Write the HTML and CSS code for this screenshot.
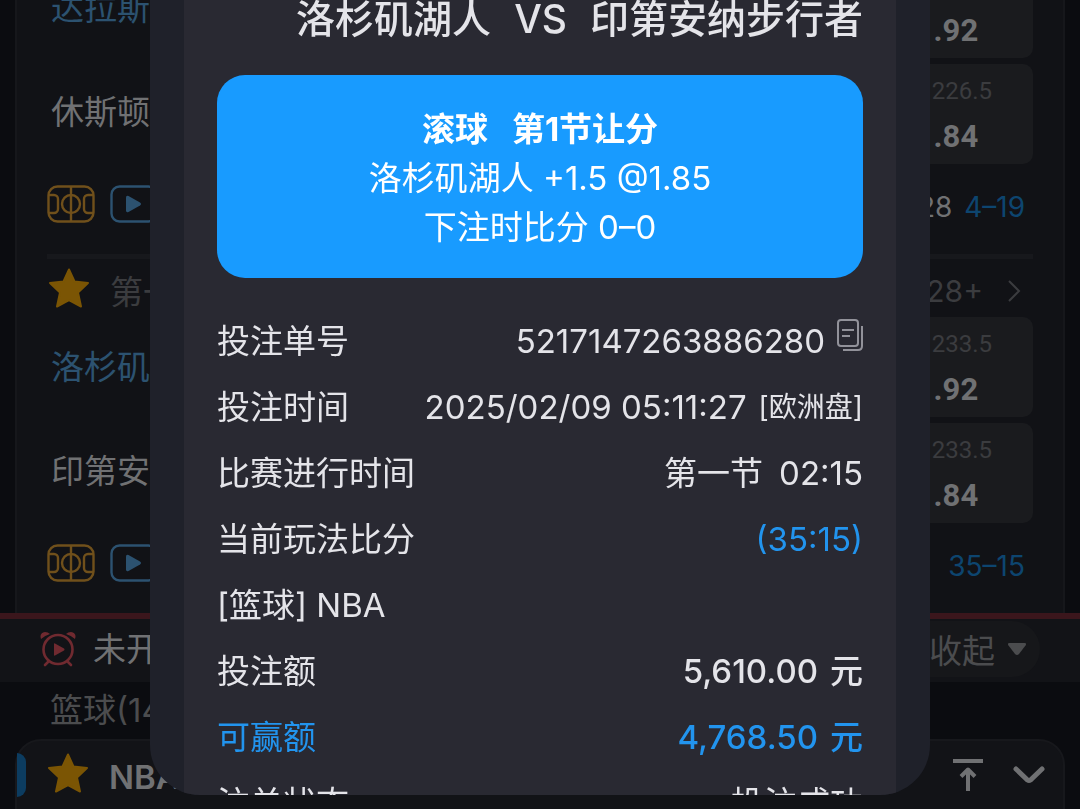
FILE: index.html
```html
<!DOCTYPE html>
<html lang="zh-CN">
<head>
  <meta charset="UTF-8" />
  <meta name="viewport" content="width=device-width, initial-scale=1.0"/>
  <title>注单详情</title>
  <link rel="stylesheet" href="styles.css">
</head>
<body>
  <!-- Shared icons -->
  <svg class="sprite" aria-hidden="true">
    <symbol id="court" viewBox="0 0 48 38">
      <g fill="none" stroke="currentColor" stroke-width="2.4">
        <rect x="1.5" y="1.5" width="45" height="35" rx="9"/>
        <path d="M24 2v34M2 10h5a4 4 0 0 1 4 4v10a4 4 0 0 1-4 4H2M46 10h-5a4 4 0 0 0-4 4v10a4 4 0 0 0 4 4h5"/>
        <circle cx="24" cy="19" r="9"/>
      </g>
    </symbol>
    <symbol id="video" viewBox="0 0 48 38">
      <rect x="1.5" y="1.5" width="45" height="35" rx="8" fill="none" stroke="currentColor" stroke-width="2.4"/>
      <path d="M16 12.500v13q0 2.500 2.500 1.500L30 20.500q2-1.500 0-3L18.500 11q-2.500-1-2.500 1.500z" fill="currentColor"/>
    </symbol>
    <symbol id="star" viewBox="0 0 42 40">
      <path d="M21 1.500L26.500 13.500 40 15 30 24.500 33 38.500 21 32 9 38.500 12 24.500 2 15 15.500 13.500z" fill="currentColor" stroke="currentColor" stroke-width="2" stroke-linejoin="round"/>
    </symbol>
  </svg>

  <main class="page">
    <section class="board">
      <article class="match">
        <div class="line">
          <span class="team serving">达拉斯独行侠</span>
          <button class="odds"><span>大 226.5</span><b>1.92</b></button>
        </div>
        <div class="line">
          <span class="team">休斯顿火箭</span>
          <button class="odds"><span>小 226.5</span><b>1.84</b></button>
        </div>
        <div class="match-foot">
          <svg class="court"><use href="#court"/></svg>
          <svg class="video"><use href="#video"/></svg>
          <p class="score">28–28 <em>4–19</em></p>
        </div>
      </article>

      <article class="match">
        <div class="match-head">
          <svg class="star"><use href="#star"/></svg>
          <span class="period">第一节</span>
          <a class="more" href="#">128+
            <svg viewBox="0 0 14 24"><path d="M2 2l10 10L2 22" fill="none" stroke="currentColor" stroke-width="2"/></svg>
          </a>
        </div>
        <div class="line">
          <span class="team serving">洛杉矶湖人</span>
          <button class="odds"><span>大 233.5</span><b>1.92</b></button>
        </div>
        <div class="line">
          <span class="team">印第安纳步行者</span>
          <button class="odds"><span>小 233.5</span><b>1.84</b></button>
        </div>
        <div class="match-foot">
          <svg class="court"><use href="#court"/></svg>
          <svg class="video"><use href="#video"/></svg>
          <p class="score"><em>35–15</em></p>
        </div>
      </article>
    </section>

    <section class="upcoming">
      <svg class="alarm" viewBox="0 0 36 36">
        <g fill="none" stroke="currentColor" stroke-width="2.6" stroke-linecap="round">
          <circle cx="18" cy="18.500" r="14.500"/>
          <path d="M8 31l-3 3M28 31l3 3"/>
        </g>
        <path d="M1 8q-2-6 4-7 3 0 5 2-5 1.500-9 5zM35 8q2-6-4-7-3 0-5 2 5 1.500 9 5zM14 13v11q0 1 1 .5l9-5q1-1 0-2l-9-5q-1-.5-1 .5z" fill="currentColor"/>
      </svg>
      <h2>未开赛</h2>
      <button class="collapse">收起
        <svg viewBox="0 0 20 14"><path d="M2.500 1h15q2.500 0 1 2.500L12 12q-2 2-4 0L1.500 3.500Q0 1 2.500 1z" fill="currentColor"/></svg>
      </button>
    </section>

    <p class="sport">篮球(14)</p>

    <section class="league">
      <svg class="star"><use href="#star"/></svg>
      <h3>NBA</h3>
      <svg class="to-top" viewBox="0 0 30 32"><path d="M0 2h30M15 32V11M8 17.500L15 10.500l7 7" fill="none" stroke="currentColor" stroke-width="4" stroke-linejoin="round"/></svg>
      <svg class="chevron" viewBox="0 0 32 18"><path d="M3 3l11.500 11q1.500 1 3 0L29 3" fill="none" stroke="currentColor" stroke-width="5" stroke-linecap="round"/></svg>
    </section>
  </main>

  <!-- Bet detail -->
  <div class="modal" role="dialog" aria-label="注单详情">
    <div class="ticket">
      <h1><span>洛杉矶湖人</span><span>VS</span><span>印第安纳步行者</span></h1>

      <div class="pick">
        <strong><span>滚球</span><span>第1节让分</span></strong>
        <p>洛杉矶湖人 +1.5 @1.85</p>
        <p>下注时比分 0–0</p>
      </div>

      <dl class="details">
        <div>
          <dt>投注单号</dt>
          <dd>5217147263886280
            <button class="copy" aria-label="复制">
              <svg viewBox="0 0 26 32"><g fill="none" stroke="currentColor" stroke-width="2"><rect x="1" y="1" width="20" height="26" rx="3"/><path d="M5 11h12M5 17h8"/><path d="M25 7v20q0 4-4 4H6"/></g></svg>
            </button>
          </dd>
        </div>
        <div><dt>投注时间</dt><dd>2025/02/09 05:11:27 <small>[欧洲盘]</small></dd></div>
        <div><dt>比赛进行时间</dt><dd class="clock"><span>第一节</span><span>02:15</span></dd></div>
        <div><dt>当前玩法比分</dt><dd class="blue">(35:15)</dd></div>
        <div><dt>[篮球] NBA</dt></div>
        <div><dt>投注额</dt><dd class="money">5,610.00<span>元</span></dd></div>
        <div class="blue"><dt>可赢额</dt><dd class="money">4,768.50<span>元</span></dd></div>
        <div><dt>注单状态</dt><dd>投注成功</dd></div>
      </dl>
    </div>
  </div>
</body>
</html>
```
FILE: styles.css
```css
* {
  box-sizing: border-box;
}

body {
  margin: 0;
  height: 100vh;
  overflow: hidden;
  background: #0b0c10;
  color: #707173;
  font-family: Inter, "Noto Sans CJK SC", sans-serif;
  font-size: 33px;
}

h1, h2, h3, p, dl, dd {
  margin: 0;
  font-weight: 400;
}

button {
  border: none;
  padding: 0;
  background: none;
  color: inherit;
  font: inherit;
  cursor: pointer;
}

svg {
  display: block;
  flex: none;
}

.sprite {
  position: absolute;
  width: 0;
  height: 0;
}

/* the list sits scrolled under the modal */
.page {
  margin-top: -42px;
}

.board {
  margin: 0 15px;
  padding: 0 30px;
  border: solid #16171b;
  border-width: 0 2px;
  background: #111216;
}

.match + .match {
  border-top: 5px solid #17181c;
}

.line {
  display: flex;
  align-items: center;
  justify-content: space-between;
  height: 100px;
  padding-left: 4px;
}

.line + .line {
  margin-top: 6px;
}

.team {
  padding-bottom: 8px;
}

.serving {
  padding-bottom: 4px;
  color: #2c5270;
}

.odds {
  width: 164px;
  height: 100px;
  padding-right: 8px;
  border-radius: 10px;
  background: #1a1b1e;
  font-family: Roboto, "Noto Sans CJK SC", sans-serif;
}

.odds span,
.odds b {
  display: block;
  line-height: 45px;
}

.odds span {
  color: #3b3c3f;
  font-size: 24px;
}

.odds b {
  font-size: 31px;
}

.match-foot {
  display: flex;
  align-items: center;
  gap: 15px;
  height: 90px;
  padding-bottom: 10px;
}

.court,
.video {
  width: 48px;
  height: 38px;
}

.court {
  color: #70501b;
}

.video {
  color: #2c5270;
}

.score {
  margin-left: auto;
  padding: 6px 8px 0 0;
  font-size: 28px;
}

.score em {
  margin-left: 4px;
  color: #0d456f;
  font-style: normal;
}

.match-head {
  display: flex;
  align-items: center;
  height: 58px;
  color: #3b3c3f;
}

.star {
  width: 42px;
  height: 40px;
  margin: 0 20px 0 1px;
  color: #7b5504;
}

.period {
  padding-top: 4px;
}

.more {
  display: flex;
  align-items: center;
  gap: 24px;
  margin-left: auto;
  padding: 6px 12px 0 0;
  color: inherit;
  font-size: 30px;
  text-decoration: none;
}

.more svg {
  width: 14px;
  height: 24px;
}

.upcoming {
  display: flex;
  align-items: center;
  height: 69px;
  padding: 0 40px 4px;
  border-top: 6px solid #3b161c;
  background: #121317;
}

.upcoming h2 {
  padding-bottom: 4px;
  margin-left: 17px;
  font-size: 33px;
}

.alarm {
  width: 36px;
  height: 36px;
  color: #702a30;
}

.collapse {
  display: flex;
  align-items: center;
  gap: 12px;
  height: 56px;
  margin-left: auto;
  padding: 0 13px 0 30px;
  border-radius: 28px;
  background: #16171a;
  color: #4b4c4e;
}

.collapse svg {
  width: 20px;
  height: 14px;
}

.sport {
  padding-left: 50px;
  color: #4b4c4e;
  line-height: 57px;
}

.league {
  position: relative;
  display: flex;
  align-items: center;
  height: 100px;
  margin: 0 15px;
  padding: 0 18px 28px 30px;
  border: 2px solid #17181c;
  border-radius: 26px;
  background: #121317;
}

.league::before {
  content: "";
  position: absolute;
  top: 12px;
  left: 0;
  width: 9px;
  height: 44px;
  border-radius: 0 9px 9px 0;
  background: #0c3c60;
}

.league .star {
  margin: 0 20px 4px 0;
}

.league h3 {
  margin-right: auto;
  padding-top: 4px;
  font-size: 33px;
  font-weight: 600;
}

.to-top {
  width: 30px;
  height: 32px;
  margin-right: 30px;
}

.chevron {
  width: 32px;
  height: 18px;
}

.modal {
  position: fixed;
  top: 0;
  right: 150px;
  bottom: 14px;
  left: 150px;
  overflow: hidden;
  padding: 0 34px;
  border-radius: 0 0 50px 50px;
  background: #1f212a;
  color: #e4e4e9;
}

.ticket {
  min-height: 100%;
  padding: 0 33px;
  background: #292932;
}

.ticket h1 {
  display: flex;
  justify-content: flex-end;
  gap: 23px;
  height: 75px;
  font-size: 39px;
  font-weight: 500;
  line-height: 38px;
  white-space: nowrap;
}

.pick {
  padding: 30px 20px 26px;
  border-radius: 28px;
  background: #189bff;
  color: #fff;
  line-height: 49px;
  text-align: center;
}

.pick strong {
  display: flex;
  justify-content: center;
  gap: 24px;
}

.details {
  padding-top: 30px;
}

.details > div {
  display: flex;
  justify-content: space-between;
  height: 66px;
  line-height: 66px;
  white-space: nowrap;
}

.details dd {
  display: flex;
}

.details small {
  margin-left: 12px;
  font-size: 28px;
}

.details .blue {
  color: #2294ee;
}

.copy {
  align-self: center;
  margin: 0 0 12px 12px;
  color: #92929a;
}

.copy svg {
  width: 26px;
  height: 32px;
}

.clock {
  gap: 16px;
}

.money {
  gap: 12px;
  font-weight: 500;
}
```
